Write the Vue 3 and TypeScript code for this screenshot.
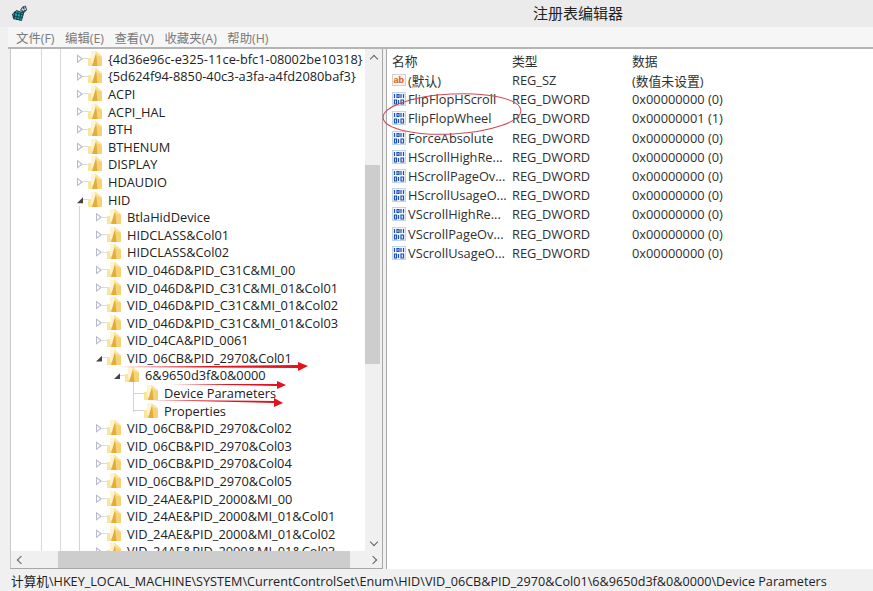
<script setup lang="ts">
interface TreeRow {
  label: string
  level: number
  state: 'closed' | 'open' | 'leaf'
}

interface ValueRow {
  name: string
  type: string
  data: string
  kind: 'sz' | 'bin'
}

const closed = (level: number, labels: string[]): TreeRow[] =>
  labels.map((label) => ({ label, level, state: 'closed' as const }))

const treeRows: TreeRow[] = [
  ...closed(1, [
    '{4d36e96c-e325-11ce-bfc1-08002be10318}',
    '{5d624f94-8850-40c3-a3fa-a4fd2080baf3}',
    'ACPI',
    'ACPI_HAL',
    'BTH',
    'BTHENUM',
    'DISPLAY',
    'HDAUDIO',
  ]),
  { label: 'HID', level: 1, state: 'open' },
  ...closed(2, [
    'BtlaHidDevice',
    'HIDCLASS&Col01',
    'HIDCLASS&Col02',
    'VID_046D&PID_C31C&MI_00',
    'VID_046D&PID_C31C&MI_01&Col01',
    'VID_046D&PID_C31C&MI_01&Col02',
    'VID_046D&PID_C31C&MI_01&Col03',
    'VID_04CA&PID_0061',
  ]),
  { label: 'VID_06CB&PID_2970&Col01', level: 2, state: 'open' },
  { label: '6&9650d3f&0&0000', level: 3, state: 'open' },
  { label: 'Device Parameters', level: 4, state: 'leaf' },
  { label: 'Properties', level: 4, state: 'leaf' },
  ...closed(2, [
    'VID_06CB&PID_2970&Col02',
    'VID_06CB&PID_2970&Col03',
    'VID_06CB&PID_2970&Col04',
    'VID_06CB&PID_2970&Col05',
    'VID_24AE&PID_2000&MI_00',
    'VID_24AE&PID_2000&MI_01&Col01',
    'VID_24AE&PID_2000&MI_01&Col02',
    'VID_24AE&PID_2000&MI_01&Col03',
  ]),
]

const dword = (name: string, value = '0x00000000 (0)'): ValueRow => ({
  name,
  type: 'REG_DWORD',
  data: value,
  kind: 'bin',
})

const valueRows: ValueRow[] = [
  { name: '(默认)', type: 'REG_SZ', data: '(数值未设置)', kind: 'sz' },
  dword('FlipFlopHScroll'),
  dword('FlipFlopWheel', '0x00000001 (1)'),
  dword('ForceAbsolute'),
  dword('HScrollHighRe...'),
  dword('HScrollPageOv...'),
  dword('HScrollUsageO...'),
  dword('VScrollHighRe...'),
  dword('VScrollPageOv...'),
  dword('VScrollUsageO...'),
]

const menus = ['文件(F)', '编辑(E)', '查看(V)', '收藏夹(A)', '帮助(H)']
const statusPath =
  '计算机\\HKEY_LOCAL_MACHINE\\SYSTEM\\CurrentControlSet\\Enum\\HID\\VID_06CB&PID_2970&Col01\\6&9650d3f&0&0000\\Device Parameters'
</script>

<template>
  <div class="window">
    <header class="titlebar">
      <svg class="app-icon" width="16" height="17" viewBox="0 0 16 17">
        <path d="M0.500 9l4-3.500 7 2.500-2 7.500-8-2z" fill="#22a5a6" stroke="#07303c" stroke-width="0.900" />
        <path d="M3 6.500l-1 8M6 7l-1.500 8M9 7.500l-1.500 7.500M1 11l9.500 1.500M2.500 7.500l9 2.500" fill="none" stroke="#07303c" stroke-width="0.800" />
        <path d="M11.500 8l3-3-1-4-3 1-2 3z" fill="#31566e" stroke="#0c1c28" stroke-width="0.700" />
        <path d="M10 2.500l1.500 3.500M12.500 1.500l1 3.500M9 5l5-1" stroke="#e8eef2" stroke-width="0.700" />
      </svg>
      <span class="title">注册表编辑器</span>
    </header>

    <nav class="menubar">
      <span v-for="m in menus" :key="m" class="menu-item">{{ m }}</span>
    </nav>

    <main class="panes">
      <section class="tree-pane">
        <div class="tree-body">
          <ul class="tree">
            <li
              v-for="row in treeRows"
              :key="row.label"
              class="tree-row"
              :class="`level-${row.level}`"
            >
              <span class="twisty" :class="row.state"></span>
              <span class="stub" :class="row.state"></span>
              <svg class="folder" width="14" height="16" viewBox="0 0 14 16">
                <path d="M0 7h3V0h5l6 5v10H0z" fill="#f9e59c" />
                <path d="M3 0h4l1 3v9H3z" fill="#fff4cf" />
                <path d="M8 4l-1 11h7V6z" fill="#f5d275" />
                <path d="M8 2l1.500 13H4z" fill="#e6ac3a" />
              </svg>
              <span class="tree-label">{{ row.label }}</span>
            </li>
          </ul>
          <div class="vscroll">
            <span class="chev up"></span>
            <div class="vtrack"><div class="vthumb"></div></div>
            <span class="chev down"></span>
          </div>
        </div>
        <div class="hscroll">
          <span class="chev left"></span>
          <div class="htrack"><div class="hthumb"></div></div>
          <span class="chev right"></span>
        </div>
      </section>

      <section class="list-pane">
        <div class="list-row list-head">
          <span class="col-name">名称</span>
          <span class="col-type">类型</span>
          <span class="col-data">数据</span>
        </div>
        <div v-for="v in valueRows" :key="v.name" class="list-row">
          <span class="col-name">
            <svg v-if="v.kind === 'sz'" class="val-icon" width="14" height="14" viewBox="0 0 14 14">
              <rect x="0.500" y="1.500" width="13" height="11" fill="#fdf6f0" stroke="#d9cfc8" />
              <text x="1.500" y="10" class="ab-text">ab</text>
            </svg>
            <svg v-else class="val-icon" width="14" height="14" viewBox="0 0 14 14">
              <rect x="0.500" y="0.500" width="13" height="13" fill="#f2f6fc" stroke="#c4d4e8" />
              <path d="M2.500 2v4M5 2.500h2v3h-2zM9 2v4M11.500 2v4" fill="none" stroke="#1d4fb0" stroke-width="1.200" />
              <path d="M2.500 8h2v4h-2zM6.500 8v4M9 8h2.500v4H9z" fill="none" stroke="#1d4fb0" stroke-width="1.200" />
            </svg>
            <span class="val-name">{{ v.name }}</span>
          </span>
          <span class="col-type">{{ v.type }}</span>
          <span class="col-data">{{ v.data }}</span>
        </div>
      </section>
    </main>

    <footer class="statusbar">{{ statusPath }}</footer>

    <svg class="marks" width="873" height="591" viewBox="0 0 873 591">
      <ellipse cx="452" cy="114" rx="69" ry="20" transform="rotate(-3 452 114)" fill="none" stroke="#cf4a58" stroke-width="1" />
      <path d="M118 367l180-2v-3l10 4-10 5v-3z" fill="#e3121c" />
      <path d="M171 384l106 0v-3l9 4-9 4v-3z" fill="#e3121c" />
      <path d="M150 400l124 1v-3l9 5-9 4v-4z" fill="#e3121c" />
    </svg>
  </div>
</template>

<style>
html,
body {
  margin: 0;
  background: #f0f0f0;
}
</style>

<style scoped>
.window {
  position: relative;
  width: 873px;
  height: 591px;
  display: flex;
  flex-direction: column;
  overflow: hidden;
  background: #f0f0f0;
  color: #1c1c1c;
  font-family: "Open Sans", "Noto Sans CJK SC", sans-serif;
  font-size: 12.800px;
}

.titlebar {
  height: 27px;
  flex: none;
  display: flex;
  align-items: center;
  padding-left: 12px;
  background: #ebebeb;
}

.title {
  margin-left: 505px;
  margin-bottom: 3px;
  font-size: 15px;
  color: #222;
}

.menubar {
  height: 19px;
  flex: none;
  display: flex;
  align-items: center;
  margin-left: 8px;
  padding: 1px 0 0 8px;
  gap: 10.500px;
  background: #f6f6f6;
  border-bottom: 2px solid #b4b4b4;
  font-size: 12.400px;
  color: #7a7a7a;
}

.panes {
  flex: 1;
  min-height: 0;
  display: flex;
  gap: 3px;
  padding-left: 10px;
}

.tree-pane {
  width: 373px;
  flex: none;
  display: flex;
  flex-direction: column;
  background: #fff;
  border-right: 1px solid #a8a8a8;
  border-left: 1px solid #c8c8c8;
  border-bottom: 1px solid #a8a8a8;
  box-sizing: border-box;
}

.tree-body {
  flex: 1;
  min-height: 0;
  display: flex;
}

.tree {
  flex: 1;
  min-width: 0;
  margin: 0;
  padding: 1px 0 0;
  list-style: none;
  overflow: hidden;
  background:
    linear-gradient(#d8d8d8, #d8d8d8) 30px 0 / 1px 100% no-repeat,
    linear-gradient(#d8d8d8, #d8d8d8) 49px 0 / 1px 100% no-repeat,
    linear-gradient(#d4d4d4, #d4d4d4) 68px 157px / 1px 100% no-repeat,
    linear-gradient(#d4d4d4, #d4d4d4) 122px 332px / 1px 31px no-repeat;
}

.tree-row {
  height: 17.600px;
  display: flex;
  align-items: center;
  white-space: nowrap;
}

.level-1 { padding-left: 66px; }
.level-2 { padding-left: 85px; }
.level-3 { padding-left: 103px; }
.level-4 { padding-left: 122px; }

.twisty {
  width: 6px;
  height: 9px;
  flex: none;
  position: relative;
  background: #fff;
}

.twisty.closed {
  clip-path: polygon(0 0, 100% 50%, 0 100%);
  background: #b9b9cc;
}

.twisty.closed::after {
  content: "";
  position: absolute;
  left: 1px;
  top: 2px;
  width: 3px;
  height: 5px;
  clip-path: polygon(0 0, 100% 50%, 0 100%);
  background: #fff;
}

.twisty.open {
  clip-path: polygon(100% 25%, 100% 90%, 0 90%);
  background: #444;
}

.twisty.leaf {
  height: 1px;
  background: #d4d4d4;
}

.stub {
  width: 5px;
  height: 1px;
  flex: none;
  background: #dcdcdc;
}

.stub.leaf {
  background: #d4d4d4;
}

.folder {
  flex: none;
  margin-right: 6px;
}

.tree-label {
  color: #222;
}

.vscroll {
  width: 17px;
  flex: none;
  display: flex;
  flex-direction: column;
  align-items: center;
  background: #f0f0f0;
}

.vtrack {
  flex: 1;
  width: 100%;
  padding: 99px 2px 0 0;
  box-sizing: border-box;
}

.vthumb {
  height: 199px;
  background: #cdcdcd;
}

.hscroll {
  height: 17px;
  flex: none;
  display: flex;
  align-items: center;
  background: #f0f0f0;
}

.htrack {
  flex: 1;
  height: 100%;
  padding-left: 30px;
  box-sizing: border-box;
}

.hthumb {
  width: 292px;
  height: 100%;
  background: #cdcdcd;
}

.chev {
  width: 17px;
  height: 17px;
  flex: none;
  position: relative;
}

.chev::after {
  content: "";
  position: absolute;
  left: 5.500px;
  top: 5.500px;
  width: 6px;
  height: 6px;
  border-top: 1.500px solid #606060;
  border-left: 1.500px solid #606060;
  box-sizing: border-box;
}

.chev.up::after { transform: translateY(1px) rotate(45deg); }
.chev.down::after { transform: translateY(-1px) rotate(225deg); }
.chev.left::after { transform: translateX(1px) rotate(-45deg); }
.chev.right::after { transform: translateX(-1px) rotate(135deg); }

.list-pane {
  flex: 1;
  background: #fff;
  border-left: 1px solid #a8a8a8;
  padding-top: 2px;
}

.list-row {
  height: 19.200px;
  display: flex;
  align-items: center;
  color: #303030;
}

.list-head {
  height: 19.500px;
}

.col-name {
  width: 125px;
  flex: none;
  padding-left: 5px;
  box-sizing: border-box;
  display: flex;
  align-items: center;
  overflow: hidden;
  white-space: nowrap;
}

.col-type {
  width: 120px;
  flex: none;
}

.val-icon {
  flex: none;
  margin-right: 2px;
}

.ab-text {
  font-family: "Liberation Sans", sans-serif;
  font-size: 9px;
  font-weight: 700;
  fill: #d8571a;
}

.statusbar {
  height: 22px;
  flex: none;
  display: flex;
  align-items: center;
  padding-left: 11px;
  white-space: nowrap;
  background: #f0f0f0;
  color: #222;
  font-size: 12.650px;
}

.marks {
  position: absolute;
  left: 0;
  top: 0;
  pointer-events: none;
}
</style>
